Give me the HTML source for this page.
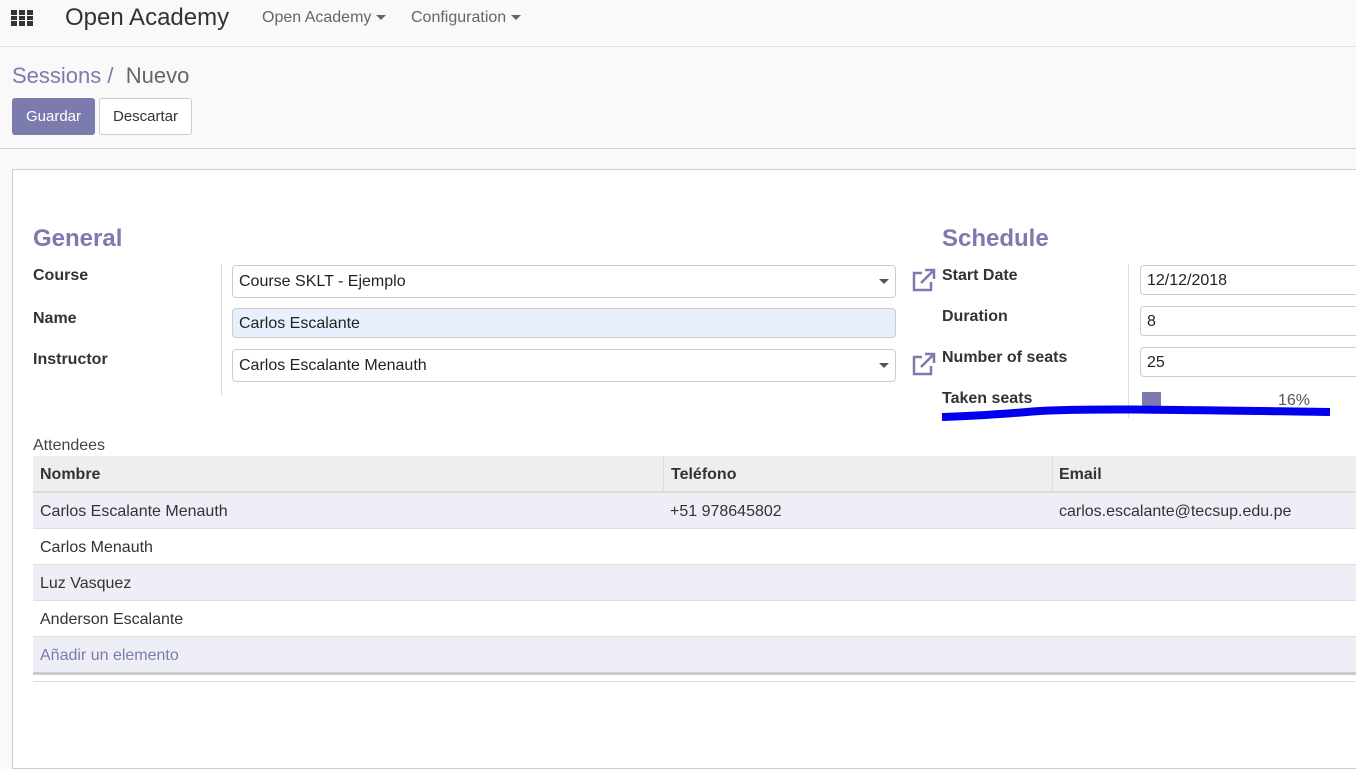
<!DOCTYPE html>
<html><head><meta charset="utf-8"><style>
*{box-sizing:border-box;margin:0;padding:0}
body{width:1356px;height:723px;overflow:hidden;background:#f9f9f9;font-family:"Liberation Sans",sans-serif;font-size:16px;color:#333;position:relative}
.a{position:absolute}
.lbl{position:absolute;font-weight:bold;font-size:16px;color:#333}
.inp{position:absolute;background:#fff;border:1px solid #ccc;border-radius:4px;height:32px;padding:7px 6px;font-size:16px;color:#222}
.caret{position:absolute;right:6px;top:13px;width:0;height:0;border-left:5px solid transparent;border-right:5px solid transparent;border-top:5px solid #555}
.row{position:absolute;left:33px;width:1323px;height:36px;border-bottom:1px solid #ddd;padding:10px 7px;font-size:16px}
</style></head><body>
<div class="a" style="left:0;top:0;width:1356px;height:47px;background:#f9f9f9;border-bottom:1px solid #e3e3e3"></div>
<svg class="a" style="left:11px;top:10px" width="22" height="16"><g fill="#333">
<rect x="0" y="0" width="6" height="5"/><rect x="8" y="0" width="6" height="5"/><rect x="16" y="0" width="6" height="5"/>
<rect x="0" y="6" width="6" height="4"/><rect x="8" y="6" width="6" height="4"/><rect x="16" y="6" width="6" height="4"/>
<rect x="0" y="11" width="6" height="5"/><rect x="8" y="11" width="6" height="5"/><rect x="16" y="11" width="6" height="5"/></g></svg>
<div class="a" style="left:65px;top:4px;font-size:24px;color:#333">Open Academy</div>
<div class="a" style="left:262px;top:9px;font-size:16px;color:#666">Open Academy <span style="display:inline-block;border-left:5px solid transparent;border-right:5px solid transparent;border-top:5px solid #666;vertical-align:middle"></span></div>
<div class="a" style="left:411px;top:9px;font-size:16px;color:#666">Configuration <span style="display:inline-block;border-left:5px solid transparent;border-right:5px solid transparent;border-top:5px solid #666;vertical-align:middle"></span></div>
<div class="a" style="left:12px;top:63px;font-size:22px;color:#7c7bad">Sessions / <span style="color:#666">&nbsp;Nuevo</span></div>
<div class="a" style="left:12px;top:98px;width:83px;height:37px;background:#7c7bad;border-radius:3px;color:#fff;font-size:15px;text-align:center;line-height:37px">Guardar</div>
<div class="a" style="left:99px;top:98px;width:93px;height:37px;background:#fff;border:1px solid #ccc;border-radius:3px;color:#333;font-size:15px;text-align:center;line-height:35px">Descartar</div>
<div class="a" style="left:0;top:148px;width:1356px;height:1px;background:#d0d0d0"></div>
<div class="a" style="left:12px;top:169px;width:1344px;height:600px;background:#fff;border:1px solid #ccc;border-right:none"></div>
<div class="a" style="left:33px;top:225px;font-size:24px;font-weight:bold;color:#7c7bad">General</div>
<div class="a" style="left:942px;top:225px;font-size:24px;font-weight:bold;color:#7c7bad">Schedule</div>
<div class="a" style="left:221px;top:264px;width:1px;height:132px;background:#ddd"></div>
<div class="a" style="left:1128px;top:264px;width:1px;height:154px;background:#ddd"></div>
<div class="lbl" style="left:33px;top:267px">Course</div>
<div class="lbl" style="left:33px;top:310px">Name</div>
<div class="lbl" style="left:33px;top:351px">Instructor</div>
<div class="inp" style="left:232px;top:265px;width:664px;height:33px">Course SKLT - Ejemplo<span class="caret"></span></div>
<div class="inp" style="left:232px;top:308px;width:664px;height:30px;background:#e8f0fe;padding-top:6px">Carlos Escalante</div>
<div class="inp" style="left:232px;top:349px;width:664px;height:33px">Carlos Escalante Menauth<span class="caret"></span></div>
<svg class="a" style="left:911px;top:268px" width="26" height="24" viewBox="0 0 26 24"><g fill="none" stroke="#7c7bad" stroke-width="2.5"><path d="M11 5H3v17h17v-8"/><path d="M10 15L22 3M14 2h9v9"/></g></svg>
<svg class="a" style="left:911px;top:352px" width="26" height="24" viewBox="0 0 26 24"><g fill="none" stroke="#7c7bad" stroke-width="2.5"><path d="M11 5H3v17h17v-8"/><path d="M10 15L22 3M14 2h9v9"/></g></svg>
<div class="lbl" style="left:942px;top:267px">Start Date</div>
<div class="lbl" style="left:942px;top:308px">Duration</div>
<div class="lbl" style="left:942px;top:349px">Number of seats</div>
<div class="lbl" style="left:942px;top:390px">Taken seats</div>
<div class="inp" style="left:1140px;top:265px;width:230px;height:30px;padding-top:6px">12/12/2018</div>
<div class="inp" style="left:1140px;top:306px;width:230px;height:30px;padding-top:6px">8</div>
<div class="inp" style="left:1140px;top:347px;width:230px;height:30px;padding-top:6px">25</div>
<div class="a" style="left:1142px;top:392px;width:19px;height:16px;background:#7c7bad"></div>
<div class="a" style="left:1278px;top:392px;font-size:16px;color:#555">16%</div>
<svg class="a" style="left:940px;top:402px" width="392" height="22"><path d="M2 15 C40 14,60 12,100 9 C150 6,250 8,390 10" fill="none" stroke="#0000ee" stroke-width="8"/></svg>
<div class="a" style="left:33px;top:437px;font-size:16px;color:#444">Attendees</div>
<div class="a" style="left:33px;top:456px;width:1323px;height:37px;background:#eee;border-bottom:2px solid #ddd"></div>
<div class="lbl" style="left:40px;top:466px">Nombre</div>
<div class="lbl" style="left:671px;top:466px">Teléfono</div>
<div class="lbl" style="left:1059px;top:466px">Email</div>
<div class="a" style="left:663px;top:456px;width:1px;height:36px;background:#ddd"></div>
<div class="a" style="left:1052px;top:456px;width:1px;height:36px;background:#ddd"></div>
<div class="row" style="top:493px;background:#eeeef7">Carlos Escalante Menauth<span class="a" style="left:637px;top:10px">+51 978645802</span><span class="a" style="left:1026px;top:10px">carlos.escalante@tecsup.edu.pe</span></div>
<div class="row" style="top:529px;background:#fff">Carlos Menauth</div>
<div class="row" style="top:565px;background:#eeeef7">Luz Vasquez</div>
<div class="row" style="top:601px;background:#fff">Anderson Escalante</div>
<div class="row" style="top:637px;background:#eeeef7;color:#7c7bad;border-bottom:3px solid #ccc;height:38px">Añadir un elemento</div>
<div class="a" style="left:33px;top:681px;width:1323px;height:1px;background:#ddd"></div>
</body></html>
